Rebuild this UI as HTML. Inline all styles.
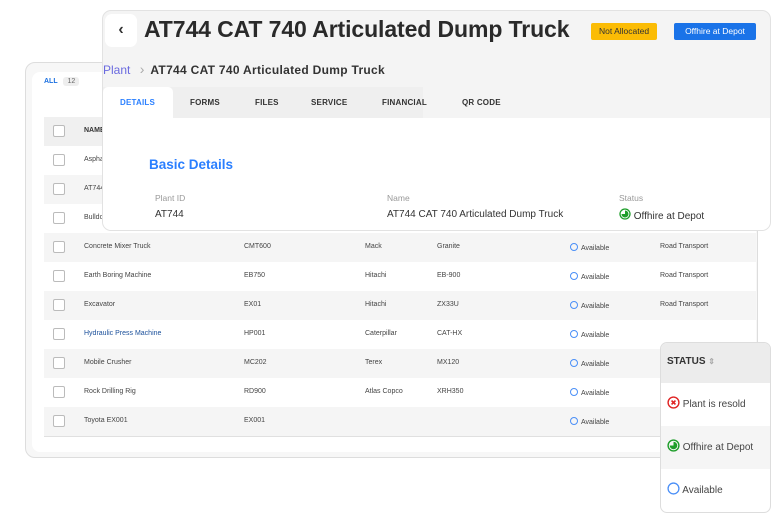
<!DOCTYPE html>
<html><head><style>
*{box-sizing:border-box;margin:0;padding:0}
body{width:780px;height:520px;background:#fff;font-family:"Liberation Sans",sans-serif;position:relative;overflow:hidden;color:#333}
.abs{position:absolute}
.back{left:25px;top:62px;width:733px;height:396px;border:1px solid #ddd;border-radius:10px;background:#f7f7f7}
.inner{left:32px;top:72px;width:724px;height:380px;background:#fff;border-radius:8px}
.row{position:absolute;left:44px;width:712px;height:29px;font-size:7px;color:#444}
.row span{position:absolute;top:10px}
.cb{position:absolute;left:9px;top:8px;width:12px;height:12px;border:1px solid #bbb;border-radius:2px;background:#fff}
.g{background:#f5f5f5}
.circ{display:inline-block;width:8px;height:8px;border:1px solid #4a8ff7;border-radius:50%;vertical-align:-1px;margin-right:3px}
.front{left:102px;top:10px;width:669px;height:221px;background:#f4f4f4;border:1px solid #e2e2e2;border-radius:9px;overflow:hidden}
.tab{position:absolute;font-size:8px;font-weight:bold;color:#333;letter-spacing:0.2px}
</style></head><body>
<div class="abs back"></div>
<div class="abs inner"></div>
<div class="abs" style="left:44px;top:78px;font-size:7px;font-weight:bold;color:#1a6fe0">ALL <span style="background:#eee;color:#666;font-weight:normal;padding:1px 4px;border-radius:3px;margin-left:4px">12</span></div>
<div class="row" style="top:117px;height:29px;background:#f0f0f0"><div class="cb"></div><span style="left:40px;font-weight:bold;color:#333">NAME</span></div>
<div class="row" style="top:146px"><div class="cb"></div><span style="left:40px">Asphalt</span></div>
<div class="row g" style="top:175px"><div class="cb"></div><span style="left:40px">AT744</span></div>
<div class="row" style="top:204px"><div class="cb"></div><span style="left:40px">Bulldozer</span></div>
<div class="row g" style="top:233px"><div class="cb"></div><span style="left:40px">Concrete Mixer Truck</span><span style="left:200px">CMT600</span><span style="left:321px">Mack</span><span style="left:393px">Granite</span><span style="left:526px"><i class="circ"></i>Available</span><span style="left:616px">Road Transport</span></div>
<div class="row" style="top:262px"><div class="cb"></div><span style="left:40px">Earth Boring Machine</span><span style="left:200px">EB750</span><span style="left:321px">Hitachi</span><span style="left:393px">EB-900</span><span style="left:526px"><i class="circ"></i>Available</span><span style="left:616px">Road Transport</span></div>
<div class="row g" style="top:291px"><div class="cb"></div><span style="left:40px">Excavator</span><span style="left:200px">EX01</span><span style="left:321px">Hitachi</span><span style="left:393px">ZX33U</span><span style="left:526px"><i class="circ"></i>Available</span><span style="left:616px">Road Transport</span></div>
<div class="row" style="top:320px"><div class="cb"></div><span style="left:40px;color:#1a4f9a">Hydraulic Press Machine</span><span style="left:200px">HP001</span><span style="left:321px">Caterpillar</span><span style="left:393px">CAT-HX</span><span style="left:526px"><i class="circ"></i>Available</span></div>
<div class="row g" style="top:349px"><div class="cb"></div><span style="left:40px">Mobile Crusher</span><span style="left:200px">MC202</span><span style="left:321px">Terex</span><span style="left:393px">MX120</span><span style="left:526px"><i class="circ"></i>Available</span></div>
<div class="row" style="top:378px"><div class="cb"></div><span style="left:40px">Rock Drilling Rig</span><span style="left:200px">RD900</span><span style="left:321px">Atlas Copco</span><span style="left:393px">XRH350</span><span style="left:526px"><i class="circ"></i>Available</span></div>
<div class="row g" style="top:407px"><div class="cb"></div><span style="left:40px">Toyota EX001</span><span style="left:200px">EX001</span><span style="left:526px"><i class="circ"></i>Available</span></div>
<div class="abs" style="left:44px;top:436px;width:712px;border-top:1px solid #e0e0e0"></div>

<div class="abs front">
 <div class="abs" style="left:2px;top:3px;width:32px;height:33px;background:#fff;border-radius:7px;font-size:16px;text-align:center;line-height:32px;font-weight:bold">&#8249;</div>
 <div class="abs" style="left:41px;top:5px;font-size:23px;font-weight:bold;color:#2a2a2a;letter-spacing:-0.1px">AT744 CAT 740 Articulated Dump Truck</div>
 <div class="abs" style="left:488px;top:12px;width:66px;height:17px;background:#fbbc05;border-radius:2px;font-size:8.5px;line-height:17px;text-align:center;color:#333">Not Allocated</div>
 <div class="abs" style="left:571px;top:12px;width:82px;height:17px;background:#1a73e8;border-radius:2px;font-size:8.5px;line-height:17px;text-align:center;color:#fff">Offhire at Depot</div>
 <div class="abs" style="left:0;top:50px;font-size:12px;color:#6a6adf">Plant <span style="color:#aaa;margin:0 6px;font-size:14px">&#8250;</span><b style="color:#333;font-size:12px;letter-spacing:0.3px">AT744 CAT 740 Articulated Dump Truck</b></div>
 <div class="abs" style="left:0;top:76px;width:320px;height:31px;background:#efefef"></div>
 <div class="abs" style="left:0;top:76px;width:70px;height:31px;background:#fff;border-radius:5px 5px 0 0"></div>
 <div class="abs" style="left:0;top:107px;width:669px;height:114px;background:#fff"></div>
 <div class="tab" style="left:17px;top:87px;color:#2a7fff">DETAILS</div>
 <div class="tab" style="left:87px;top:87px">FORMS</div>
 <div class="tab" style="left:152px;top:87px">FILES</div>
 <div class="tab" style="left:208px;top:87px">SERVICE</div>
 <div class="tab" style="left:279px;top:87px">FINANCIAL</div>
 <div class="tab" style="left:359px;top:87px">QR CODE</div>
 <div class="abs" style="left:46px;top:146px;font-size:13.5px;font-weight:bold;color:#2a7fff">Basic Details</div>
 <div class="abs" style="left:52px;top:182px;font-size:8.5px;color:#999">Plant ID</div>
 <div class="abs" style="left:52px;top:198px;font-size:10px;color:#333">AT744</div>
 <div class="abs" style="left:284px;top:182px;font-size:8.5px;color:#999">Name</div>
 <div class="abs" style="left:284px;top:198px;font-size:10px;color:#333">AT744 CAT 740 Articulated Dump Truck</div>
 <div class="abs" style="left:516px;top:182px;font-size:8.5px;color:#999">Status</div>
 <div class="abs" style="left:516px;top:197px;font-size:10px;color:#333"><svg width="12" height="12" viewBox="0 0 12 12" style="vertical-align:-1px"><circle cx="6" cy="6" r="5" fill="none" stroke="#1e9e2a" stroke-width="1.3"/><path d="M6 6V2.5A3.5 3.5 0 1 1 2.5 6Z" fill="#1e9e2a"/></svg> Offhire at Depot</div>
</div>

<div class="abs" style="left:660px;top:342px;width:111px;height:171px;background:#fff;border:1px solid #ddd;border-radius:7px;overflow:hidden">
 <div style="height:40px;background:#ececec;font-size:10px;font-weight:bold;line-height:38px;padding-left:6px;color:#333">STATUS <span style="color:#aaa;font-size:8px">&#8661;</span></div>
 <div style="height:43px;line-height:43px;padding-left:6px;font-size:10px;color:#444"><svg width="13" height="13" viewBox="0 0 12 12" style="vertical-align:-2px"><circle cx="6" cy="6" r="5" fill="none" stroke="#e02424" stroke-width="1.3"/><path d="M4.2 4.2L7.8 7.8M7.8 4.2L4.2 7.8" stroke="#e02424" stroke-width="1.5"/></svg> Plant is resold</div>
 <div style="height:43px;line-height:43px;padding-left:6px;font-size:10px;color:#444;background:#f5f5f5"><svg width="13" height="13" viewBox="0 0 12 12" style="vertical-align:-2px"><circle cx="6" cy="6" r="5" fill="none" stroke="#1e9e2a" stroke-width="1.3"/><path d="M6 6V2.5A3.5 3.5 0 1 1 2.5 6Z" fill="#1e9e2a"/></svg> Offhire at Depot</div>
 <div style="height:43px;line-height:43px;padding-left:6px;font-size:10px;color:#444"><svg width="13" height="13" viewBox="0 0 12 12" style="vertical-align:-2px"><circle cx="6" cy="6" r="5" fill="none" stroke="#4a8ff7" stroke-width="1.2"/></svg> Available</div>
</div>
</body></html>
